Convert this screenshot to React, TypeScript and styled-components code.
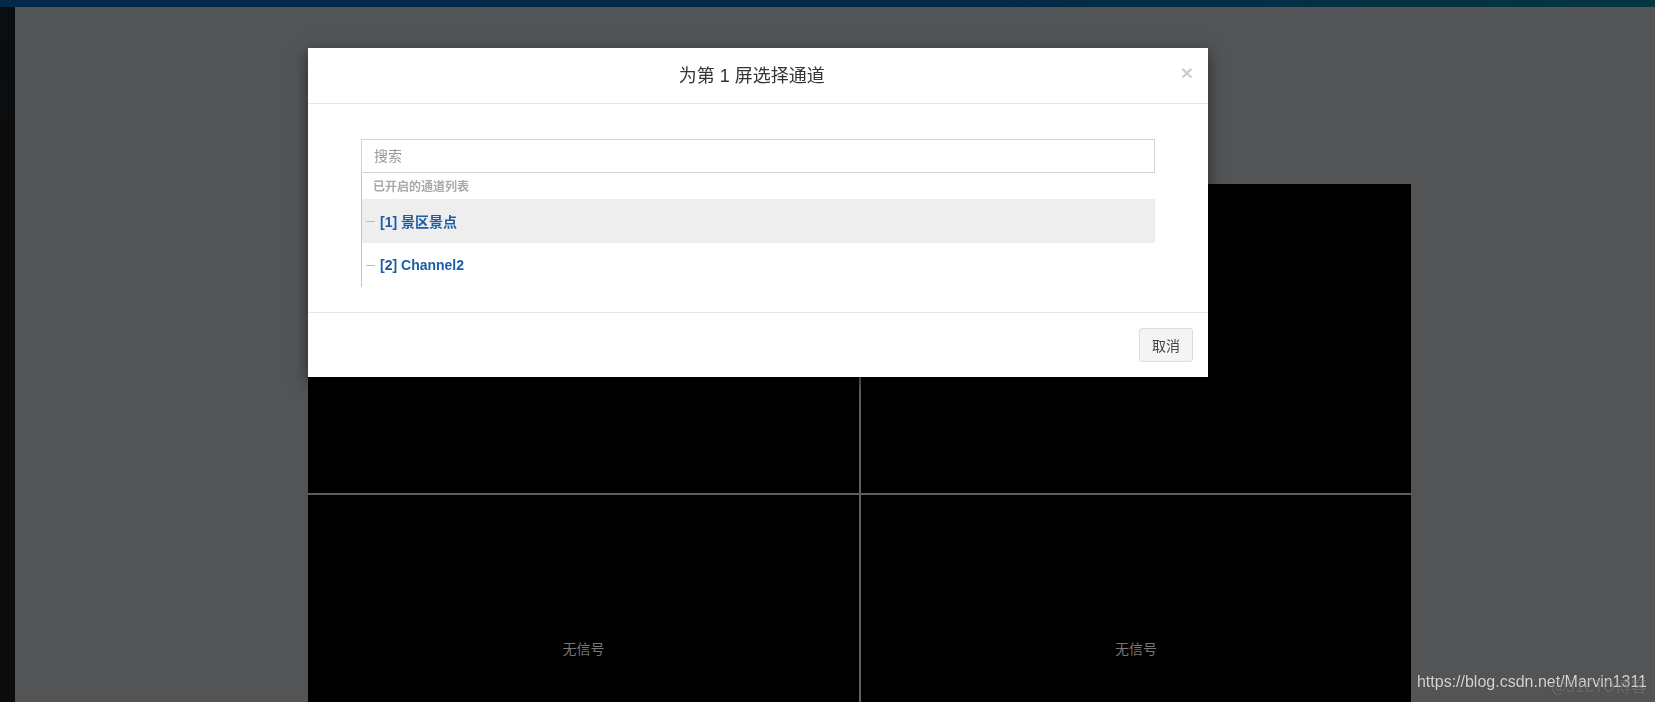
import styled, { createGlobalStyle } from "styled-components";

const GlobalStyle = createGlobalStyle`
  html, body {
    margin: 0;
    padding: 0;
    height: 100%;
    overflow: hidden;
    background: #535455;
  }
  body {
    font-family: "Liberation Sans", Arial, "Noto Sans CJK SC", sans-serif;
    font-size: 14px;
    color: #333;
  }
  * {
    box-sizing: border-box;
  }
`;

const channels = [
  { id: 1, name: "景区景点", active: true },
  { id: 2, name: "Channel2", active: false },
];

// the two top screens sit under the modal, only the bottom row shows its label
const screens = [false, false, true, true];

export default function App() {
  return (
    <>
      <GlobalStyle />
      <Page>
        <TopBar />
        <Layout>
          <SideStrip />
          <Main>
            <VideoGrid>
              {screens.map((visible, i) => (
                <VideoCell key={i}>{visible && <NoSignal>无信号</NoSignal>}</VideoCell>
              ))}
            </VideoGrid>
          </Main>
        </Layout>
      </Page>

      <Overlay>
        <Modal>
          <ModalHeader>
            <ModalTitle>为第 1 屏选择通道</ModalTitle>
            <CloseButton type="button">×</CloseButton>
          </ModalHeader>
          <ModalBody>
            <SearchInput placeholder="搜索" />
            <Tree>
              <TreeLabel>已开启的通道列表</TreeLabel>
              {channels.map((c) => (
                <TreeItem key={c.id} $active={c.active}>
                  <Dash />
                  <ItemText>
                    [{c.id}] {c.name}
                  </ItemText>
                </TreeItem>
              ))}
            </Tree>
          </ModalBody>
          <ModalFooter>
            <Button type="button">取消</Button>
          </ModalFooter>
        </Modal>
      </Overlay>

      <Watermark>
        https://blog.csdn.net/Marvin1311
        <WatermarkGhost>@51CTO博客</WatermarkGhost>
      </Watermark>
    </>
  );
}

const Page = styled.div`
  display: flex;
  flex-direction: column;
  height: 100vh;
`;

const TopBar = styled.div`
  height: 7px;
  flex-shrink: 0;
  background: linear-gradient(90deg, #03284a 0%, #032a48 60%, #05363f 100%);
`;

const Layout = styled.div`
  display: flex;
  flex: 1;
  min-height: 0;
`;

const SideStrip = styled.div`
  width: 15px;
  flex-shrink: 0;
  background: linear-gradient(180deg, #0a0e11 0px, #0b0d0e 110px, #0c0c0c 120px);
`;

const Main = styled.div`
  flex: 1;
  padding: 177px 0 0 293px;
  background: #535455;
`;

const VideoGrid = styled.div`
  display: grid;
  grid-template-columns: 551px 550px;
  grid-template-rows: 309px 309px;
  gap: 2px;
  width: 1103px;
  background: #5f5f5f;
`;

const VideoCell = styled.div`
  background: #000;
  display: flex;
  align-items: center;
  justify-content: center;
`;

const NoSignal = styled.span`
  color: #777;
  font-size: 14px;
  margin-top: -4px;
`;

const Overlay = styled.div`
  position: fixed;
  inset: 0;
  padding: 48px 0 0 308px;
`;

const Modal = styled.div`
  width: 900px;
  background: #fff;
  box-shadow: 0 5px 15px rgba(0, 0, 0, 0.5);
`;

const ModalHeader = styled.div`
  display: flex;
  align-items: center;
  padding: 16px 15px 14px;
  border-bottom: 1px solid #e5e5e5;
`;

const ModalTitle = styled.h4`
  flex: 1;
  margin: 0;
  text-align: center;
  font-size: 18px;
  font-weight: normal;
  line-height: 25px;
  color: #333;
`;

const CloseButton = styled.button`
  border: 0;
  background: transparent;
  padding: 0;
  margin-top: -9px;
  font-family: "Liberation Sans", Arial, sans-serif;
  font-size: 21px;
  font-weight: bold;
  line-height: 1;
  color: #000;
  opacity: 0.2;
  cursor: pointer;
`;

const ModalBody = styled.div`
  padding: 35px 53px 25px;
`;

const SearchInput = styled.input`
  display: block;
  width: 100%;
  height: 34px;
  padding: 6px 12px;
  border: 1px solid #cfd4dc;
  border-radius: 0;
  font-family: inherit;
  font-size: 14px;
  color: #555;
  outline: none;

  &::placeholder {
    color: #999;
  }
`;

const Tree = styled.div`
  border-left: 1px solid #c4c4c4;
`;

const TreeLabel = styled.div`
  height: 26px;
  line-height: 28px;
  padding-left: 11px;
  font-size: 12px;
  font-weight: bold;
  color: #aaa;
`;

const TreeItem = styled.div<{ $active: boolean }>`
  display: flex;
  align-items: center;
  height: 44px;
  padding-left: 4px;
  background: ${(p) => (p.$active ? "#eee" : "transparent")};
`;

const Dash = styled.span`
  width: 9px;
  height: 1px;
  margin-right: 5px;
  background: #bbb;
`;

const ItemText = styled.span`
  font-size: 14px;
  font-weight: bold;
  color: #1b5ea6;
`;

const ModalFooter = styled.div`
  display: flex;
  justify-content: flex-end;
  padding: 15px;
  border-top: 1px solid #e5e5e5;
`;

const Button = styled.button`
  height: 34px;
  padding: 6px 12px;
  border: 1px solid #ddd;
  border-radius: 3px;
  background: #f4f4f4;
  font-family: inherit;
  font-size: 14px;
  color: #444;
  cursor: pointer;
`;

const Watermark = styled.div`
  position: fixed;
  right: 8px;
  bottom: 11px;
  font-family: "Liberation Sans", Arial, sans-serif;
  font-size: 16px;
  color: #d6d6d6;
  text-shadow: 0 0 1px rgba(0, 0, 0, 0.4);
`;

const WatermarkGhost = styled.span`
  position: absolute;
  right: 0;
  top: 0;
  font-family: "Noto Sans CJK SC", sans-serif;
  color: rgba(255, 255, 255, 0.25);
`;
